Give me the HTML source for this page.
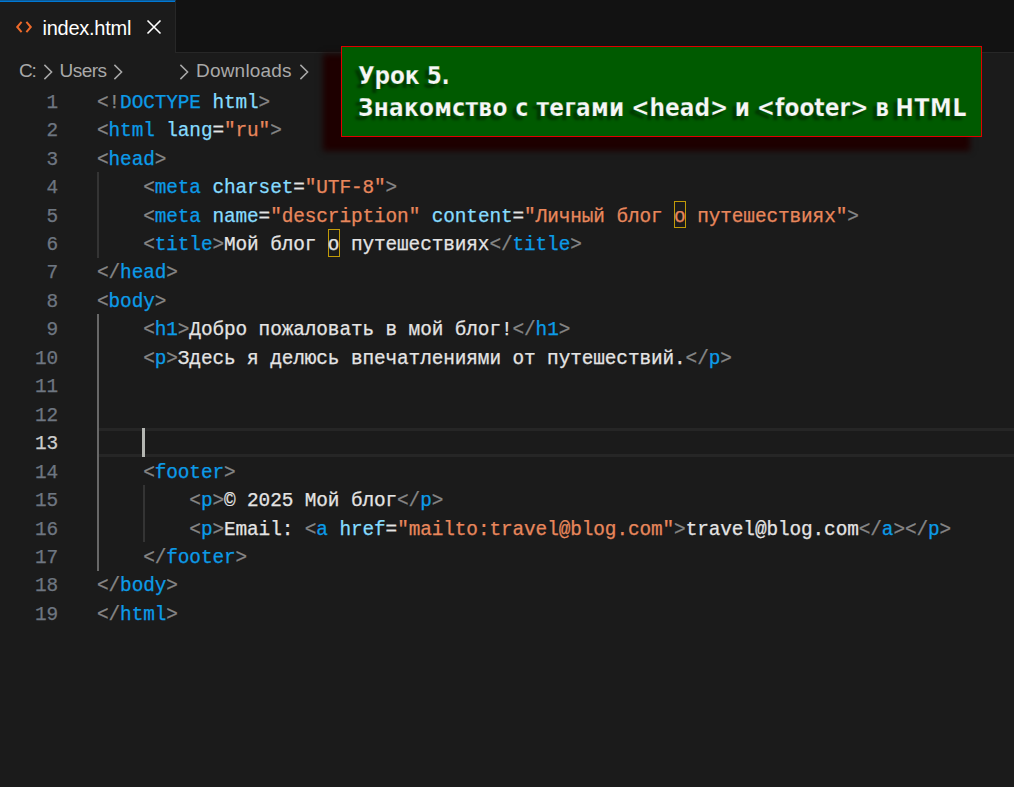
<!DOCTYPE html>
<html lang="ru">
<head>
<meta charset="UTF-8">
<title>index.html</title>
<style>
*{margin:0;padding:0;box-sizing:border-box}
html,body{width:1014px;height:787px;overflow:hidden;background:#1b1b1b}
body{position:relative;font-family:"Liberation Sans",sans-serif;color:#ccc}
#tabbar{position:absolute;left:0;top:0;width:1014px;height:53px;background:#121212;border-bottom:1px solid #272727}
#tab{position:absolute;left:0;top:0;width:176px;height:53px;background:#1b1b1b;border-top:1px solid #0a5a98;box-shadow:inset 0 1px 0 #0078d4;border-right:1px solid #272727}
#tab .ico{position:absolute;left:15px;top:19px}
#tab .name{position:absolute;left:42.5px;top:15px;font-size:20px;letter-spacing:-0.25px;color:#fff;line-height:24px;white-space:nowrap}
#tab .close{position:absolute;left:146px;top:18px}
#crumbs{position:absolute;left:0;top:56.7px;height:28px;width:1014px;font-size:19px;letter-spacing:-0.5px;line-height:28px;color:#a9a9a9;white-space:nowrap}
#crumbs span{position:absolute;top:0}
#crumbs svg{position:absolute;top:7px}
#editor{position:absolute;left:0;top:87px;width:1014px}
#etext{position:absolute;left:0;top:1.8px;width:1014px;font-family:"Liberation Mono",monospace;font-size:19.4px;letter-spacing:-0.096px;line-height:28.45px;white-space:pre;-webkit-text-stroke:0.25px}
.ln{position:absolute;left:0;width:58px;text-align:right;color:#6e7681;height:28.45px}
.ln.act{color:#ccc}
.cl{position:absolute;left:97px;height:28.45px;color:#e4e4e4}
.g{color:#858585}.t{color:#0c9be8}.a{color:#86dcff}.s{color:#e8875c}
.guide{position:absolute;width:2px;background:#343434;margin-left:-1px}
.guide.act{background:#686868}
#curline{position:absolute;left:98px;top:341px;width:916px;height:29px;border-top:3px solid #262626;border-bottom:3px solid #262626}
#cursor{position:absolute;left:142px;top:341px;width:3px;height:29px;background:#b4b6b2}
.hl{position:absolute;width:12px;height:27.5px;border:1px solid #c09a08}
#banner{position:absolute;left:341px;top:46px;width:641px;height:91px;background:#005a00;border:1px solid #e00000;box-shadow:-15.5px 10.5px 6px 3px #1e0000;color:#f6f6f6;font-family:"DejaVu Sans Condensed","Liberation Sans",sans-serif;font-weight:bold;font-size:24.2px;line-height:32.6px;padding:12.9px 0 0 16px;text-shadow:-4px 4px 2.5px rgba(0,0,0,.4);-webkit-text-stroke:0.25px #005a00;white-space:nowrap}
#banner .l1{letter-spacing:-0.2px}
#banner .cy{letter-spacing:0.27px}
#banner .la{word-spacing:-0.92px}
#banner .ht{letter-spacing:0.7px}
</style>
</head>
<body>
<div id="tabbar"></div>
<div id="tab">
<svg class="ico" width="18" height="14" viewBox="0 0 18 14"><path d="M6.6 1.8 L2.2 7 L6.6 12.2 M11.4 1.8 L15.8 7 L11.4 12.2" fill="none" stroke="#ee6a2a" stroke-width="2"/></svg>
<span class="name">index.html</span>
<svg class="close" width="16" height="16" viewBox="0 0 16 16"><path d="M1.5 1.5 L14.5 14.5 M14.5 1.5 L1.5 14.5" fill="none" stroke="#fff" stroke-width="1.6"/></svg>
</div>
<div id="crumbs">
<span style="left:19px;letter-spacing:-1.2px">C:</span>
<svg style="left:42px" width="12" height="16" viewBox="0 0 12 16"><path d="M2.4 0.9 L9.6 8 L2.4 15.1" fill="none" stroke="#a9a9a9" stroke-width="1.5"/></svg>
<span style="left:59.5px">Users</span>
<svg style="left:112px" width="12" height="16" viewBox="0 0 12 16"><path d="M2.4 0.9 L9.6 8 L2.4 15.1" fill="none" stroke="#a9a9a9" stroke-width="1.5"/></svg>
<svg style="left:178px" width="12" height="16" viewBox="0 0 12 16"><path d="M2.4 0.9 L9.6 8 L2.4 15.1" fill="none" stroke="#a9a9a9" stroke-width="1.5"/></svg>
<span style="left:196px;letter-spacing:0.2px">Downloads</span>
<svg style="left:298px" width="12" height="16" viewBox="0 0 12 16"><path d="M2.4 0.9 L9.6 8 L2.4 15.1" fill="none" stroke="#a9a9a9" stroke-width="1.5"/></svg>
</div>
<div id="editor">
<div id="curline"></div><div id="cursor"></div>
<div class="hl" style="left:674.30px;top:113.90px"></div>
<div class="hl" style="left:327.92px;top:142.35px"></div>
<div class="guide" style="left:98px;top:84.85px;height:85.95px"></div>
<div class="guide act" style="left:98px;top:227.10px;height:256.65px"></div>
<div class="guide" style="left:144px;top:397.80px;height:57.50px"></div>
<div id="etext">
<div class="ln" style="top:0.00px">1</div>
<div class="cl" style="top:0.00px"><span class="g">&lt;!</span><span class="t">DOCTYPE</span> <span class="a">html</span><span class="g">&gt;</span></div>
<div class="ln" style="top:28.45px">2</div>
<div class="cl" style="top:28.45px"><span class="g">&lt;</span><span class="t">html</span> <span class="a">lang</span>=<span class="s">"ru"</span><span class="g">&gt;</span></div>
<div class="ln" style="top:56.90px">3</div>
<div class="cl" style="top:56.90px"><span class="g">&lt;</span><span class="t">head</span><span class="g">&gt;</span></div>
<div class="ln" style="top:85.35px">4</div>
<div class="cl" style="top:85.35px">    <span class="g">&lt;</span><span class="t">meta</span> <span class="a">charset</span>=<span class="s">"UTF-8"</span><span class="g">&gt;</span></div>
<div class="ln" style="top:113.80px">5</div>
<div class="cl" style="top:113.80px">    <span class="g">&lt;</span><span class="t">meta</span> <span class="a">name</span>=<span class="s">"description"</span> <span class="a">content</span>=<span class="s">"Личный блог </span><span class="s">о</span><span class="s"> путешествиях"</span><span class="g">&gt;</span></div>
<div class="ln" style="top:142.25px">6</div>
<div class="cl" style="top:142.25px">    <span class="g">&lt;</span><span class="t">title</span><span class="g">&gt;</span>Мой блог о путешествиях<span class="g">&lt;/</span><span class="t">title</span><span class="g">&gt;</span></div>
<div class="ln" style="top:170.70px">7</div>
<div class="cl" style="top:170.70px"><span class="g">&lt;/</span><span class="t">head</span><span class="g">&gt;</span></div>
<div class="ln" style="top:199.15px">8</div>
<div class="cl" style="top:199.15px"><span class="g">&lt;</span><span class="t">body</span><span class="g">&gt;</span></div>
<div class="ln" style="top:227.60px">9</div>
<div class="cl" style="top:227.60px">    <span class="g">&lt;</span><span class="t">h1</span><span class="g">&gt;</span>Добро пожаловать в мой блог!<span class="g">&lt;/</span><span class="t">h1</span><span class="g">&gt;</span></div>
<div class="ln" style="top:256.05px">10</div>
<div class="cl" style="top:256.05px">    <span class="g">&lt;</span><span class="t">p</span><span class="g">&gt;</span>Здесь я делюсь впечатлениями от путешествий.<span class="g">&lt;/</span><span class="t">p</span><span class="g">&gt;</span></div>
<div class="ln" style="top:284.50px">11</div>
<div class="ln" style="top:312.95px">12</div>
<div class="ln act" style="top:341.40px">13</div>
<div class="ln" style="top:369.85px">14</div>
<div class="cl" style="top:369.85px">    <span class="g">&lt;</span><span class="t">footer</span><span class="g">&gt;</span></div>
<div class="ln" style="top:398.30px">15</div>
<div class="cl" style="top:398.30px">        <span class="g">&lt;</span><span class="t">p</span><span class="g">&gt;</span>© 2025 Мой блог<span class="g">&lt;/</span><span class="t">p</span><span class="g">&gt;</span></div>
<div class="ln" style="top:426.75px">16</div>
<div class="cl" style="top:426.75px">        <span class="g">&lt;</span><span class="t">p</span><span class="g">&gt;</span>Email: <span class="g">&lt;</span><span class="t">a</span> <span class="a">href</span>=<span class="s">"mailto:travel@blog.com"</span><span class="g">&gt;</span>travel@blog.com<span class="g">&lt;/</span><span class="t">a</span><span class="g">&gt;&lt;/</span><span class="t">p</span><span class="g">&gt;</span></div>
<div class="ln" style="top:455.20px">17</div>
<div class="cl" style="top:455.20px">    <span class="g">&lt;/</span><span class="t">footer</span><span class="g">&gt;</span></div>
<div class="ln" style="top:483.65px">18</div>
<div class="cl" style="top:483.65px"><span class="g">&lt;/</span><span class="t">body</span><span class="g">&gt;</span></div>
<div class="ln" style="top:512.10px">19</div>
<div class="cl" style="top:512.10px"><span class="g">&lt;/</span><span class="t">html</span><span class="g">&gt;</span></div>
</div>
</div>
<div id="banner"><span class="l1">Урок 5.</span><br><span class="cy">Знакомство с тегами</span><span class="la"> &lt;head&gt; и &lt;footer&gt; в </span><span class="ht">HTML</span></div>
</body>
</html>
